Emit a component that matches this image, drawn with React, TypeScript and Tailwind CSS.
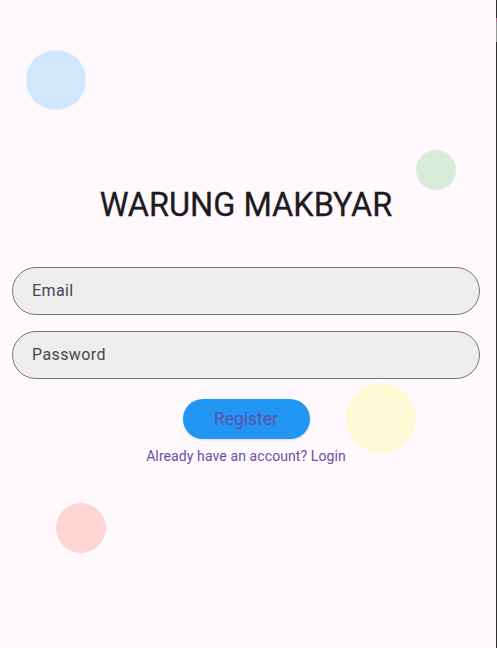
import React from "react"

const font = { fontFamily: "Roboto, 'Noto Sans', sans-serif" }

function Bubbles() {
  return (
    <>
      <div className="absolute left-[26px] top-[50px] h-[60px] w-[60px] rounded-full bg-[#d1e7fb]" />
      <div className="absolute left-[416px] top-[150px] h-[40px] w-[40px] rounded-full bg-[#d9ebd9]" />
      <div className="absolute left-[346px] top-[383px] h-[70px] w-[70px] rounded-full bg-[#fff8d5]" />
      <div className="absolute left-[56px] top-[503px] h-[50px] w-[50px] rounded-full bg-[#fdd6d3]" />
    </>
  )
}

function Field({ label }: { label: string }) {
  return (
    <div className="flex h-[48px] w-full items-center rounded-full border border-[#79747e] bg-[#eeeeee] px-[19px]">
      <span className="text-[16px] tracking-[0.4px] text-[#49454f]">{label}</span>
    </div>
  )
}

export default function App() {
  return (
    <div className="flex h-[648px] w-[497px] bg-[#fff8fd]" style={font}>
      <div className="relative flex-1 overflow-hidden">
        <Bubbles />
        <div className="relative flex flex-col items-center px-[12px] pt-[185px] pr-[16px]">
          <h1 className="text-[32.5px] leading-[40px] font-normal text-[#1d1b20] [-webkit-text-stroke:0.3px_#1d1b20]">
            WARUNG MAKBYAR
          </h1>
          <div className="mt-[42px] flex w-full flex-col gap-[16px]">
            <Field label="Email" />
            <Field label="Password" />
          </div>
          <button className="mt-[20px] h-[40px] w-[127px] rounded-full bg-[#2196f3] pt-[1px] text-[17.5px] text-[#6150a8] shadow-sm">
            Register
          </button>
          <p className="mt-[7px] text-[14px] leading-[20px] tracking-[0.1px] text-[#6750a4]">
            Already have an account? Login
          </p>
        </div>
      </div>
      <div className="flex w-px flex-col bg-[#2e2e2e]">
        <div className="mt-[18px] h-[4px] bg-[#b06a9a]" />
        <div className="h-[20px] bg-[#9a9a9a]" />
      </div>
    </div>
  )
}
